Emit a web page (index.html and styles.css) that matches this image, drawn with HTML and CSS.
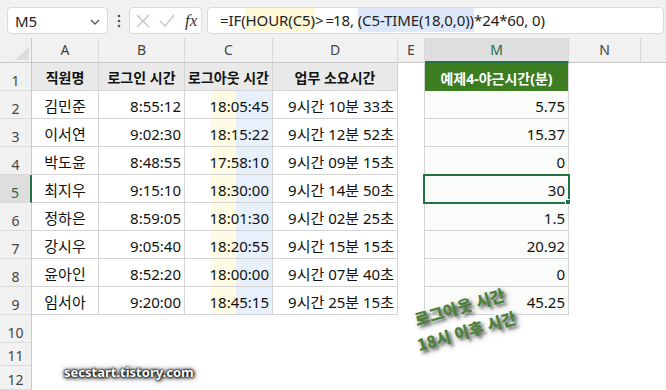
FILE: index.html
```html
<!DOCTYPE html>
<html lang="ko">
<head>
<meta charset="utf-8">
<title>Excel - 야근시간</title>
<link rel="stylesheet" href="styles.css">
</head>
<body>
<div class="app">
  <div class="toolbar">
    <div class="namebox">
      <span class="ref">M5</span>
      <svg class="chev" width="10" height="6" viewBox="0 0 10 6"><path d="M1 1 L5 5 L9 1" fill="none" stroke="#555" stroke-width="1.3"/></svg>
    </div>
    <div class="dots">
      <svg width="4" height="14" viewBox="0 0 4 14"><circle cx="2" cy="2" r="1.3" fill="#555"/><circle cx="2" cy="7" r="1.3" fill="#555"/><circle cx="2" cy="12" r="1.3" fill="#555"/></svg>
    </div>
    <div class="fnbox">
      <svg width="14" height="14" viewBox="0 0 14 14"><path d="M1 1 L13 13 M13 1 L1 13" stroke="#c2c2c2" stroke-width="1.3" fill="none"/></svg>
      <svg width="16" height="13" viewBox="0 0 16 13"><path d="M1 7 L6 12 L15 1" stroke="#c2c2c2" stroke-width="1.3" fill="none"/></svg>
      <span class="fx">fx</span>
    </div>
    <div class="formula">=IF(<span class="hl-y">HOUR(C5)</span><span class="op">&gt; =</span>18, <span class="hl-b">(C5-TIME(18,0,0))</span>*24*60, 0)</div>
  </div>

  <div class="sheet">
    <div class="corner"><span class="tri"></span></div>
    <div class="ch">A</div>
    <div class="ch">B</div>
    <div class="ch">C</div>
    <div class="ch">D</div>
    <div class="ch">E</div>
    <div class="ch sel">M</div>
    <div class="ch">N</div>
    <div class="ch last"></div>

    <div class="rh">1</div>
    <div class="cell h">직원명</div>
    <div class="cell h">로그인 시간</div>
    <div class="cell h">로그아웃 시간</div>
    <div class="cell h">업무 소요시간</div>
    <div class="e"></div>
    <div class="mh">예제4-야근시간(분)</div>
    <div class="blank"></div>

    <div class="rh">2</div>
    <div class="cell name">김민준</div>
    <div class="cell num">8:55:12</div>
    <div class="cell num cc">18:05:45</div>
    <div class="cell num">9시간 10분 33초</div>
    <div class="e"></div>
    <div class="cell num m">5.75</div>
    <div class="blank"></div>

    <div class="rh">3</div>
    <div class="cell name">이서연</div>
    <div class="cell num">9:02:30</div>
    <div class="cell num cc">18:15:22</div>
    <div class="cell num">9시간 12분 52초</div>
    <div class="e"></div>
    <div class="cell num m">15.37</div>
    <div class="blank"></div>

    <div class="rh">4</div>
    <div class="cell name">박도윤</div>
    <div class="cell num">8:48:55</div>
    <div class="cell num cc">17:58:10</div>
    <div class="cell num">9시간 09분 15초</div>
    <div class="e"></div>
    <div class="cell num m">0</div>
    <div class="blank"></div>

    <div class="rh sel">5</div>
    <div class="cell name">최지우</div>
    <div class="cell num">9:15:10</div>
    <div class="cell num cc">18:30:00</div>
    <div class="cell num">9시간 14분 50초</div>
    <div class="e"></div>
    <div class="cell num m active">30<span class="handle"></span></div>
    <div class="blank"></div>

    <div class="rh">6</div>
    <div class="cell name">정하은</div>
    <div class="cell num">8:59:05</div>
    <div class="cell num cc">18:01:30</div>
    <div class="cell num">9시간 02분 25초</div>
    <div class="e"></div>
    <div class="cell num m">1.5</div>
    <div class="blank"></div>

    <div class="rh">7</div>
    <div class="cell name">강시우</div>
    <div class="cell num">9:05:40</div>
    <div class="cell num cc">18:20:55</div>
    <div class="cell num">9시간 15분 15초</div>
    <div class="e"></div>
    <div class="cell num m">20.92</div>
    <div class="blank"></div>

    <div class="rh">8</div>
    <div class="cell name">윤아인</div>
    <div class="cell num">8:52:20</div>
    <div class="cell num cc">18:00:00</div>
    <div class="cell num">9시간 07분 40초</div>
    <div class="e"></div>
    <div class="cell num m">0</div>
    <div class="blank"></div>

    <div class="rh">9</div>
    <div class="cell name">임서아</div>
    <div class="cell num">9:20:00</div>
    <div class="cell num cc">18:45:15</div>
    <div class="cell num">9시간 25분 15초</div>
    <div class="e"></div>
    <div class="cell num m">45.25</div>
    <div class="blank"></div>

    <div class="rh">10</div>
    <div class="empty"></div>
    <div class="rh">11</div>
    <div class="empty"></div>
    <div class="rh">12</div>
    <div class="empty"></div>
  </div>

  <div class="note">로그아웃 시간<br>18시 이후 시간</div>
  <div class="watermark">secstart.tistory.com</div>
</div>
</body>
</html>
```

FILE: styles.css
```css
* { box-sizing: border-box; }
html, body { margin: 0; padding: 0; background: #fff; }
body { width: 666px; height: 390px; overflow: hidden; font-family: "Noto Sans", "Noto Sans CJK KR", sans-serif; }

.app { position: relative; width: 666px; height: 390px; }

.toolbar {
  height: 38px;
  background: #f1f1f1;
  display: flex;
  align-items: flex-start;
  padding: 7px 2px 0 7px;
}
.namebox {
  width: 101px; height: 27px;
  background: #fff;
  border: 1px solid #dadada;
  border-radius: 4px;
  display: flex; align-items: center; justify-content: space-between;
  padding: 0 7px 0 7px;
  font-size: 15px; color: #222;
}
.namebox .chev { margin-top: 2px; }
.dots { width: 21px; height: 27px; display: flex; align-items: center; justify-content: center; }
.fnbox {
  width: 73px; height: 27px;
  background: #fff;
  border: 1px solid #dadada;
  border-radius: 4px;
  display: flex; align-items: center;
  padding: 0 0 0 6px; gap: 9px;
}
.fx { font-family: "Liberation Serif", serif; font-style: italic; font-size: 17px; color: #333; margin-left: 1px; }
.formula {
  margin-left: 5px;
  flex: 1;
  height: 27px;
  background: #fff;
  border: 1px solid #dadada;
  border-radius: 4px;
  padding: 0 0 0 12px;
  font-size: 15px; line-height: 25px; color: #222;
  white-space: nowrap;
  letter-spacing: -0.1px;
}
.op { letter-spacing: -1px; }
.hl-y { background: #fdf9d8; display: inline-block; line-height: 24px; }
.hl-b { background: #dde9f8; display: inline-block; line-height: 24px; }

.sheet {
  display: grid;
  grid-template-columns: 32px 67px 86px 88px 125px 27px 144px 72px 1fr;
  grid-template-rows: 25px repeat(10, 28px) 23px 24px;
}
.corner {
  position: relative;
  background: #f1f1f1;
  border-right: 1px solid #c9c9c9;
  border-bottom: 1px solid #c9c9c9;
}
.tri {
  position: absolute; right: 2px; bottom: 2px;
  width: 0; height: 0;
  border-left: 14px solid transparent;
  border-bottom: 13px solid #dcdcdc;
}
.ch {
  background: #f1f1f1;
  border-right: 1px solid #d9d9d9;
  border-bottom: 1px solid #c9c9c9;
  font-size: 14px; color: #444;
  display: flex; justify-content: center; align-items: flex-end;
  padding-bottom: 3px; line-height: 19px;
}
.ch.last { border-right: none; }
.ch.sel { background: #dedede; color: #1e6e42; border-bottom: 2px solid #217346; padding-bottom: 2px; }
.rh {
  grid-column: 1;
  background: #f1f1f1;
  border-right: 1px solid #c9c9c9;
  border-bottom: 1px solid #dadada;
  font-size: 14px; color: #444;
  display: flex; justify-content: center; align-items: flex-end;
  padding-bottom: 0; line-height: 19px;
}
.rh.sel { background: #dedede; color: #1e6e42; border-right: 2px solid #217346; }

.cell {
  border-right: 1px solid #d4d4d4;
  border-bottom: 1px solid #d4d4d4;
  font-size: 15px; color: #111;
  display: flex; align-items: center;
  line-height: 20px;
  white-space: nowrap;
  padding-top: 3px;
}
.cell.h {
  background: #e9e9e9;
  font-weight: bold; font-size: 14px;
  justify-content: center;
  padding-top: 2px;
}
.cell.name { justify-content: center; }
.cell.num { justify-content: flex-end; padding-right: 3px; }
.cell.cc {
  background: linear-gradient(to right, #fff 0, #fff 26px, #fffce3 26px, #fffce3 51px, #e8f0fb 51px);
}
.e { border-right: 1px solid #d4d4d4; }
.cell.m { background: #f9fcf8; padding-right: 3px; }
.mh {
  background: #3c7d22;
  color: #fff;
  font-weight: bold; font-size: 14px;
  display: flex; align-items: center; justify-content: center;
  border-right: 1px solid #d4d4d4;
  padding-top: 2px;
}
.blank { grid-column: 8 / -1; }
.empty { grid-column: 2 / -1; }

.active { position: relative; }
.active::after {
  content: "";
  position: absolute;
  left: -2px; top: -1px; right: -2px; bottom: -2px;
  border: 2px solid #217346;
  pointer-events: none;
}
.handle {
  position: absolute;
  right: -3px; bottom: -3px;
  width: 6px; height: 6px;
  background: #217346;
  border: 1px solid #fff;
  z-index: 2;
}

.note {
  position: absolute;
  left: 397px; top: 294px;
  width: 132px;
  text-align: center;
  font-family: "Noto Sans CJK KR", sans-serif;
  font-weight: 900;
  font-size: 16px;
  line-height: 25px;
  color: #4a823a;
  transform: rotate(-16deg);
  -webkit-text-stroke: 2.5px #fff;
  paint-order: stroke fill;
  text-shadow: 2px 3px 3px rgba(0,0,0,0.5), 2px 3px 6px rgba(0,0,0,0.3);
}
.watermark {
  position: absolute;
  left: 64px; top: 364px;
  font-family: "Noto Sans", sans-serif;
  font-weight: bold;
  font-size: 13px;
  line-height: 16px;
  color: #fff;
  text-shadow: 0 0 2px #000, 0 0 3px #000, 1px 1px 4px #000, 0 0 6px rgba(0,0,0,0.7);
}
```
